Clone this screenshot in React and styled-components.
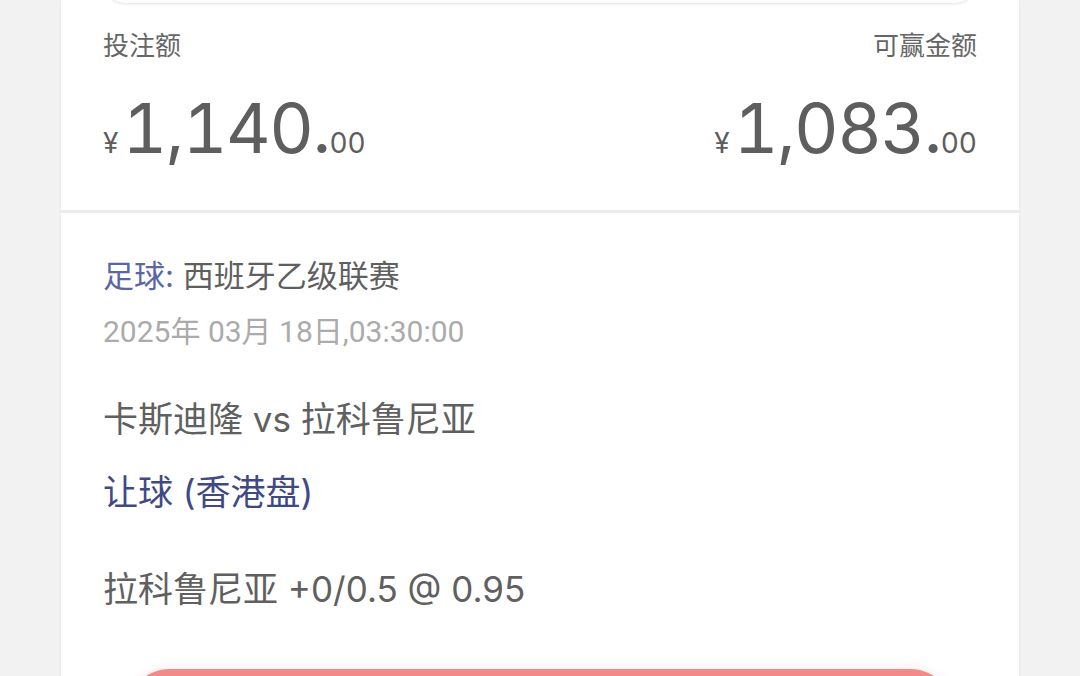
import React from "react";
import styled, { createGlobalStyle } from "styled-components";

const GlobalStyle = createGlobalStyle`
  html, body {
    margin: 0;
    padding: 0;
    background: #f2f2f2;
    font-family: Inter, "Noto Sans CJK SC", sans-serif;
    overflow: hidden;
  }
`;

const Page = styled.div`
  width: 1080px;
  height: 676px;
  overflow: hidden;
  background: #f2f2f2;
`;

const Card = styled.div`
  margin: 0 61px;
  background: #ffffff;
  box-shadow: 0 0 3px rgba(0, 0, 0, 0.06);
  display: flex;
  flex-direction: column;
`;

const TicketEdge = styled.div`
  height: 20px;
  margin: -17px 44px 0;
  background: #ffffff;
  border-radius: 0 0 22px 22px;
  box-shadow: 0 1px 3px rgba(0, 0, 0, 0.12);
`;

const Summary = styled.div`
  display: flex;
  justify-content: space-between;
  padding: 25px 42px 42px;
`;

const AmountBlock = styled.div`
  display: flex;
  flex-direction: column;
  align-items: ${(p) => (p.$right ? "flex-end" : "flex-start")};
  gap: 24px;
`;

const Label = styled.div`
  font-size: 26px;
  line-height: 36px;
  color: #666666;
`;

const Amount = styled.div`
  font-size: 69px;
  line-height: 80px;
  color: #5e5e5e;
  white-space: nowrap;
  letter-spacing: -1.5px;
  font-feature-settings: "tnum" 1;
`;

const Small = styled.span`
  font-size: 28px;
  line-height: 1;
  letter-spacing: 0;
  margin-right: ${(p) => (p.$currency ? "4px" : "0")};
`;

const Divider = styled.div`
  height: 3px;
  background: #ececec;
`;

const Detail = styled.div`
  padding: 43px 42px 0;
  display: flex;
  flex-direction: column;
`;

const League = styled.div`
  font-size: 31px;
  line-height: 40px;
  color: #5f5f5f;
`;

const Sport = styled.span`
  color: #5b67a3;
`;

const DateLine = styled.div`
  margin-top: 16px;
  font-family: Roboto, "Noto Sans CJK SC", sans-serif;
  font-size: 30px;
  line-height: 40px;
  color: #ababab;
`;

const BigLine = styled.div`
  margin-top: ${(p) => p.$gap}px;
  font-size: 35px;
  line-height: 48px;
  color: ${(p) => (p.$accent ? "#3f4a85" : "#606060")};
  white-space: pre;
`;

const Button = styled.div`
  margin: 56px 22px 0;
  height: 90px;
  border-radius: 45px;
  background: #f28a8a;
  box-shadow: 0 0 10px rgba(240, 138, 138, 0.25);
`;

export default function App() {
  return (
    <Page>
      <GlobalStyle />
      <Card>
        <TicketEdge />
        <Summary>
          <AmountBlock>
            <Label>投注额</Label>
            <Amount>
              <Small $currency>¥</Small>1,140.<Small>00</Small>
            </Amount>
          </AmountBlock>
          <AmountBlock $right>
            <Label>可赢金额</Label>
            <Amount>
              <Small $currency>¥</Small>1,083.<Small>00</Small>
            </Amount>
          </AmountBlock>
        </Summary>
        <Divider />
        <Detail>
          <League>
            <Sport>足球:</Sport> 西班牙乙级联赛
          </League>
          <DateLine>2025年 03月 18日,03:30:00</DateLine>
          <BigLine $gap={43}>卡斯迪隆 vs 拉科鲁尼亚</BigLine>
          <BigLine $gap={25} $accent>让球 (香港盘)</BigLine>
          <BigLine $gap={49}>拉科鲁尼亚 +0/0.5 @ 0.95</BigLine>
          <Button />
        </Detail>
      </Card>
    </Page>
  );
}
